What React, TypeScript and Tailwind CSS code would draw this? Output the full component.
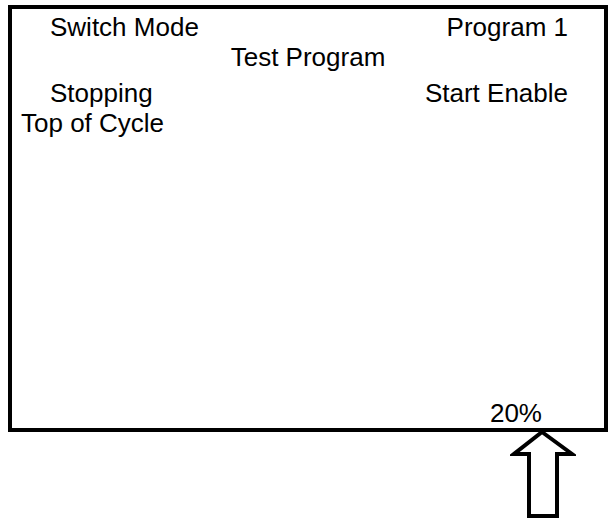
export default function App() {
  return (
    <div className="w-[608px] h-[519px] bg-white overflow-hidden text-black font-['Liberation_Sans',Arial,sans-serif]">
      {/* status panel */}
      <div className="ml-[8px] mt-[5px] w-[600px] h-[427px] border-4 border-black flex flex-col text-[26px] leading-[30px]">
        <div className="flex justify-between mt-[3px] pl-[38px] pr-[36px]">
          <span>Switch Mode</span>
          <span>Program 1</span>
        </div>
        <div className="flex justify-center">
          <span>Test Program</span>
        </div>
        <div className="flex justify-between mt-[6px] pl-[38px] pr-[36px]">
          <span>Stopping</span>
          <span>Start Enable</span>
        </div>
        <div className="flex pl-[9px]">
          <span>Top of Cycle</span>
        </div>
        <div className="flex-1" />
        <div className="flex justify-end pr-[62px]">
          <span>20%</span>
        </div>
      </div>

      {/* arrow pointing at value */}
      <div className="flex pl-[510px] -mt-[2px]">
        <svg width="66" height="90" viewBox="0 0 66 90">
          <polygon
            points="32,2 62,24 47,24 47,86 19,86 19,24 4,24"
            fill="white"
            stroke="black"
            strokeWidth="4"
            strokeLinejoin="miter"
          />
        </svg>
      </div>
    </div>
  );
}
